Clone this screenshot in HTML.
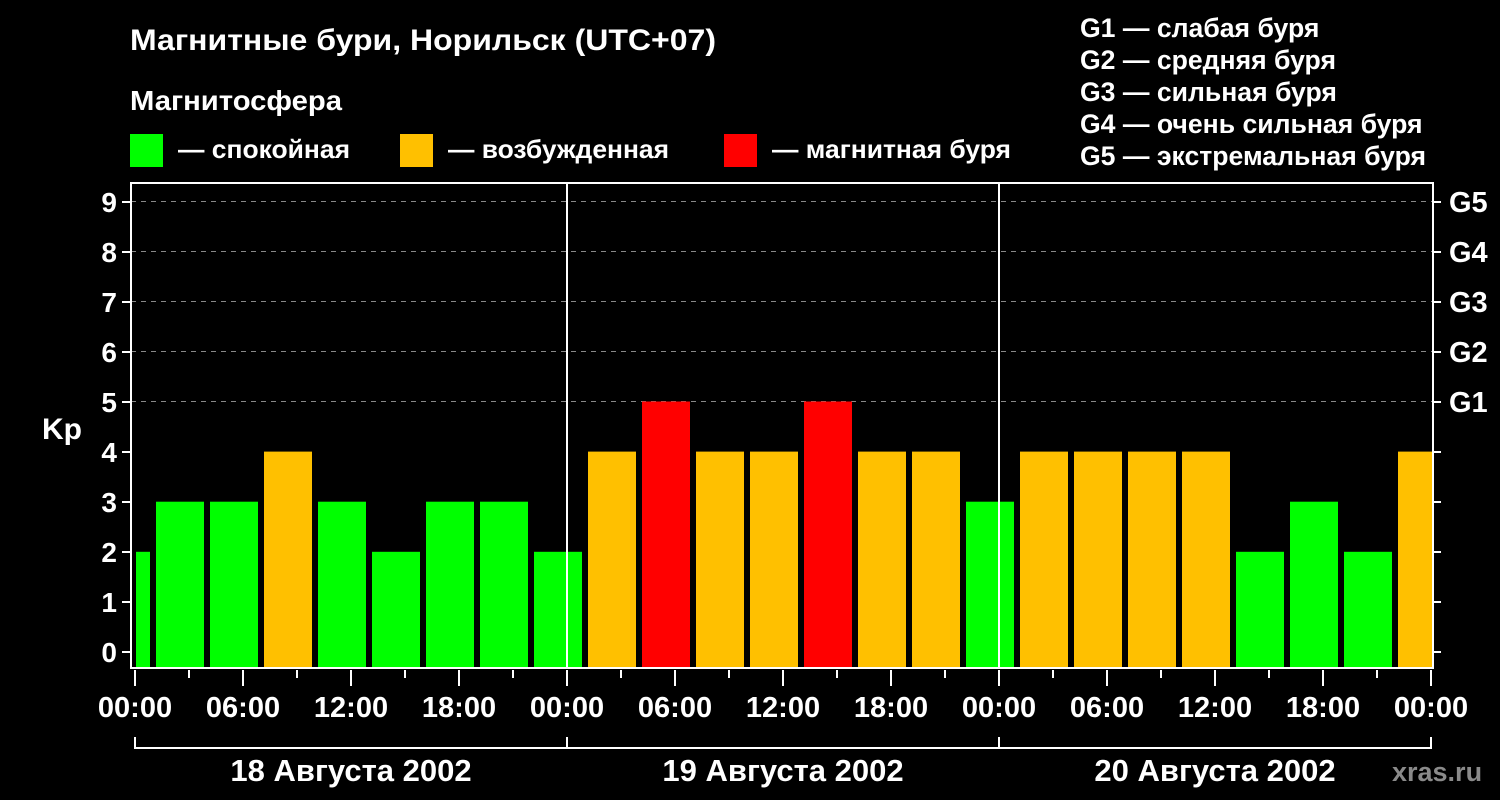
<!DOCTYPE html><html><head><meta charset="utf-8"><style>html,body{margin:0;background:#000}svg{display:block}text{font-family:"Liberation Sans",sans-serif;font-weight:bold;fill:#fff}</style></head><body>
<svg width="1500" height="800" viewBox="0 0 1500 800">
<rect width="1500" height="800" fill="#000"/>
<text x="130" y="50" font-size="30" textLength="586" lengthAdjust="spacingAndGlyphs">Магнитные бури, Норильск (UTC+07)</text>
<text x="130" y="110" font-size="28" textLength="212" lengthAdjust="spacingAndGlyphs">Магнитосфера</text>
<g font-size="26">
<rect x="130" y="134" width="33" height="33" fill="#00ff00"/><text x="178" y="158" textLength="172" lengthAdjust="spacingAndGlyphs">— спокойная</text>
<rect x="400" y="134" width="33" height="33" fill="#ffc000"/><text x="448" y="158" textLength="221" lengthAdjust="spacingAndGlyphs">— возбужденная</text>
<rect x="724" y="134" width="33" height="33" fill="#ff0000"/><text x="772" y="158" textLength="239" lengthAdjust="spacingAndGlyphs">— магнитная буря</text>
</g>
<g font-size="26.6"><text x="1080" y="37">G1 — слабая буря</text><text x="1080" y="69">G2 — средняя буря</text><text x="1080" y="101">G3 — сильная буря</text><text x="1080" y="133">G4 — очень сильная буря</text><text x="1080" y="165">G5 — экстремальная буря</text></g>
<g stroke="#888" stroke-dasharray="5,5" stroke-width="1">
<line x1="131" x2="1433" y1="201.5" y2="201.5"/><line x1="131" x2="1433" y1="251.5" y2="251.5"/><line x1="131" x2="1433" y1="301.5" y2="301.5"/><line x1="131" x2="1433" y1="351.5" y2="351.5"/><line x1="131" x2="1433" y1="401.5" y2="401.5"/></g>
<g id="bars"></g>
<g stroke="#fff" stroke-width="2" fill="none">
<rect x="131" y="183" width="1302" height="485"/>
<line x1="567" x2="567" y1="183" y2="668"/><line x1="999" x2="999" y1="183" y2="668"/>
<path d="M122 652h9M122 602h9M122 552h9M122 502h9M122 452h9M122 402h9M122 352h9M122 302h9M122 252h9M122 202h9"/>
<path d="M1433 652h8M1433 602h8M1433 552h8M1433 502h8M1433 452h8M1433 402h8M1433 352h8M1433 302h8M1433 252h8M1433 202h8"/>
<path id="ticks"/>
<path d="M135 737v11h1296v-11M567 737v11M999 737v11"/>
</g>
<g font-size="28" text-anchor="end"><text x="117" y="662">0</text><text x="117" y="612">1</text><text x="117" y="562">2</text><text x="117" y="512">3</text><text x="117" y="462">4</text><text x="117" y="412">5</text><text x="117" y="362">6</text><text x="117" y="312">7</text><text x="117" y="262">8</text><text x="117" y="212">9</text></g>
<text x="42" y="439" font-size="30">Kp</text>
<g font-size="29"><text x="1449" y="212">G5</text><text x="1449" y="262">G4</text><text x="1449" y="312">G3</text><text x="1449" y="362">G2</text><text x="1449" y="412">G1</text></g>
<g font-size="29" text-anchor="middle" id="xl"></g>
<g font-size="31" text-anchor="middle"><text x="351" y="781">18 Августа 2002</text><text x="783" y="781">19 Августа 2002</text><text x="1215" y="781">20 Августа 2002</text></g>
<text x="1392" y="781" font-size="27" style="fill:#8a8a8a">xras.ru</text>
</svg>
<script>
var ns="http://www.w3.org/2000/svg",b=document.getElementById("bars");
function r(x,w,v,c){var e=document.createElementNS(ns,"rect");e.setAttribute("x",x);e.setAttribute("width",w);var y=652-50.1*v;e.setAttribute("y",y);e.setAttribute("height",667-y);e.setAttribute("fill",c);b.appendChild(e);}
var G="#00ff00",O="#ffc000",R="#ff0000";
r(136,14,2,G);
var v=[3,3,4,3,2,3,3,2,4,5,4,4,5,4,4,3,4,4,4,4,2,3,2,4];
for(var i=0;i<v.length;i++){var x=156+54*i,w=48;if(x+w>1432)w=1432-x;var c=v[i]>=5?R:v[i]==4?O:G;r(x,w,v[i],c);}
var d="",xl=document.getElementById("xl"),lab=["00:00","06:00","12:00","18:00"];
for(var k=0;k<=24;k++){var x=135+54*k;d+="M"+x+" 670v"+(k%2==0?16:8);}
document.getElementById("ticks").setAttribute("d",d);
for(var k=0;k<=12;k++){var t=document.createElementNS(ns,"text");t.setAttribute("x",135+108*k);t.setAttribute("y",717);t.textContent=lab[k%4];xl.appendChild(t);}
</script>
</body></html>
